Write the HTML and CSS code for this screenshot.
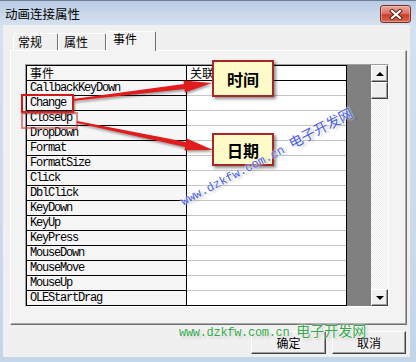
FILE: index.html
```html
<!DOCTYPE html>
<html lang="zh-CN">
<head>
  <meta charset="utf-8">
  <meta name="viewport" content="width=device-width, initial-scale=1">
  <title>动画连接属性</title>
  <link rel="stylesheet" href="styles.css">
</head>
<body>

<div class="window">
  <div class="titlebar">
    <span class="title">动画连接属性</span>
    <span class="close">
      <svg width="14" height="11" viewBox="0 0 14 11">
        <path d="M3 2 L11 9 M11 2 L3 9" stroke="#5a1812" stroke-width="4" stroke-linecap="square"/>
        <path d="M3 2 L11 9 M11 2 L3 9" stroke="#fff" stroke-width="2.2" stroke-linecap="square"/>
      </svg>
    </span>
  </div>

  <div class="client">
    <div class="tabs">
      <div class="tab t1">常规</div>
      <div class="tab t2">属性</div>
      <div class="tab active">事件</div>
    </div>

    <div class="page">
      <div class="grid">
        <div class="sheet">
          <div class="row head"><div class="c1">事件</div><div class="c2">关联变量</div></div>
          <div class="row"><div class="c1">CallbackKeyDown</div><div class="c2"></div></div>
          <div class="row"><div class="c1">Change</div><div class="c2"></div></div>
          <div class="row"><div class="c1">CloseUp</div><div class="c2"></div></div>
          <div class="row"><div class="c1">DropDown</div><div class="c2"></div></div>
          <div class="row"><div class="c1">Format</div><div class="c2"></div></div>
          <div class="row"><div class="c1">FormatSize</div><div class="c2"></div></div>
          <div class="row"><div class="c1">Click</div><div class="c2"></div></div>
          <div class="row"><div class="c1">DblClick</div><div class="c2"></div></div>
          <div class="row"><div class="c1">KeyDown</div><div class="c2"></div></div>
          <div class="row"><div class="c1">KeyUp</div><div class="c2"></div></div>
          <div class="row"><div class="c1">KeyPress</div><div class="c2"></div></div>
          <div class="row"><div class="c1">MouseDown</div><div class="c2"></div></div>
          <div class="row"><div class="c1">MouseMove</div><div class="c2"></div></div>
          <div class="row"><div class="c1">MouseUp</div><div class="c2"></div></div>
          <div class="row"><div class="c1">OLEStartDrag</div><div class="c2"></div></div>
        </div>
        <div class="dead"></div>
        <div class="vscroll">
          <div class="sbtn"><span class="arr up"></span></div>
          <div class="thumb"></div>
          <div class="track"></div>
          <div class="sbtn"><span class="arr down"></span></div>
        </div>
      </div>
    </div>

    <div class="buttons">
      <button class="btn ok">确定</button>
      <button class="btn">取消</button>
    </div>
  </div>

  <!-- annotations drawn over the dialog -->
  <div class="mark mark-change"></div>
  <div class="mark mark-closeup"></div>
  <svg class="arrows" width="416" height="362" viewBox="0 0 416 362">
    <polygon points="72.9,98 183.9,82.9 183.5,79.4 212,82 184.9,91.4 184.5,87.9 73.1,100"/>
    <polygon points="77.2,120 186.1,141 186.8,137.5 213,149 184.4,149.3 185.1,145.9 76.8,122"/>
  </svg>
  <div class="callout callout-time">时间</div>
  <div class="callout callout-date">日期</div>
  <div class="wm wm-diag"><span class="lat">www.dzkfw.com.cn </span><span class="cjk">电子开发网</span></div>
  <div class="wm wm-foot"><span class="lat">www.dzkfw.com.cn </span><span class="cjk">电子开发网</span></div>
</div>

</body>
</html>
```

FILE: styles.css
```css
body {margin: 0; background: #fff; font-family: "Noto Sans CJK SC", "DejaVu Sans", sans-serif;}

.window {position: relative; width: 416px; height: 362px; display: flex; flex-direction: column; box-sizing: border-box;
  background: linear-gradient(to bottom, #b7cbe4 0, #cbd9eb 14px, #d6e1ef 25px, #c4d5ea 100%);
  border-top: 1px solid #6d7f96; overflow: hidden;}

/* title bar */
.titlebar {height: 24px; display: flex; align-items: flex-start; padding-left: 5px;}
.title {font-size: 12.5px; line-height: 14px; margin-top: 6px; color: #000; flex: 1;}
.close {width: 31px; height: 18px; margin: 4px 5px 0 0; box-sizing: border-box; border: 1px solid #7b2a22; border-radius: 3px;
  background: linear-gradient(to bottom, #eba398 0, #dc7566 45%, #c8402f 55%, #d9664f 100%);
  display: flex; align-items: center; justify-content: center; box-shadow: inset 0 0 0 1px rgba(255,255,255,.35);}

/* dialog client area */
.client {flex: 1; margin: 0 6px 5px 3px; background: #f0f0f0; padding: 6px 3px 0 7px; display: flex; flex-direction: column;}

.tabs {display: flex; align-items: flex-end; height: 19px; padding-left: 3px; position: relative; z-index: 1;}
.tab {height: 17px; box-sizing: border-box; border: 1px solid; border-color: #fff #6f6f6f transparent #fff; border-bottom: none;
  border-radius: 2px 2px 0 0; font-size: 12px; line-height: 14px; padding: 1px 0 0 4px; background: #f0f0f0; color: #000;}
.t1 {width: 45px;}
.t2 {width: 48px; padding-left: 5px;}
.tab.active {width: 50px; height: 20px; margin-bottom: -1px; padding: 0 0 0 6px; background: #f3f3f3;}

.page {height: 275px; box-sizing: border-box; border: 1px solid; border-color: #fff #6f6f6f #6f6f6f #fff;
  box-shadow: inset -1px -1px #a8a8a8; background: #f3f3f3; padding: 13px 0 0 14px;}

/* event grid */
.grid {display: flex; width: 364px; box-sizing: border-box; border: 1px solid; border-color: #a0a0a0 #fff #fff #a0a0a0;}
.sheet {width: 321px; box-sizing: border-box; border: 1px solid #000;}
.row {display: flex; height: 15px; box-sizing: border-box;}
.row:last-child {height: 14px;}
.c1 {width: 160px; box-sizing: border-box; border-right: 1px solid #000; border-bottom: 1px solid #000; background: #f6f6f6;
  padding-left: 3px; font-family: "Liberation Mono", monospace; font-size: 12px; letter-spacing: -1.2px; line-height: 14px; color: #000;}
.c2 {flex: 1; border-bottom: 1px solid #c4c4c4; background: #fff; padding-left: 3px; font-size: 12px; line-height: 14px;}
.row:last-child .c1, .row:last-child .c2 {border-bottom: none;}
.head .c1, .head .c2 {border-bottom-color: #000; font-family: "Noto Sans CJK SC", sans-serif; font-size: 12px; letter-spacing: 0;}
.dead {width: 24px; background: #808080;}

.vscroll {width: 17px; display: flex; flex-direction: column;
  background: repeating-conic-gradient(#fff 0 25%, #ebebeb 0 50%) 0 0 / 2px 2px;}
.sbtn, .thumb {height: 17px; box-sizing: border-box; background: #f0f0f0; border: 1px solid; border-color: #fff #404040 #404040 #fff;
  box-shadow: inset -1px -1px #a0a0a0; display: flex; align-items: center; justify-content: center;}
.track {flex: 1;}
.arr {width: 0; height: 0; border-left: 4px solid transparent; border-right: 4px solid transparent;}
.arr.up {border-bottom: 4px solid #000;}
.arr.down {border-top: 4px solid #000;}

.buttons {display: flex; justify-content: flex-end; gap: 6px; margin: 6px 1px 0 0;}
.btn {width: 74px; height: 23px; box-sizing: border-box; background: #f0f0f0; border: 1px solid; border-color: #fff #404040 #404040 #fff;
  box-shadow: inset -1px -1px #a0a0a0; font-family: "Noto Sans CJK SC", sans-serif; font-size: 12px; color: #000; padding: 0;}
.btn.ok {width: 75px;}

/* annotations */
.mark {position: absolute; box-sizing: border-box;}
.mark-change {left: 21px; top: 93px; width: 53px; height: 19px; border: 2px solid #d01a1a; box-shadow: 1px 1px 2px rgba(0,0,0,.4);}
.mark-closeup {left: 21px; top: 111px; width: 57px; height: 17px; border: 2px solid rgba(214,60,60,.6);}

.arrows {position: absolute; left: 0; top: 0; pointer-events: none; filter: drop-shadow(1px 2px 1px rgba(0,0,0,.35));}
.arrows polygon {fill: #e21c1c;}

.callout {position: absolute; left: 212px; width: 62px; box-sizing: border-box; border: 2px solid #a8282a; background: #fffbc8;
  box-shadow: 2px 2px 3px rgba(0,0,0,.45); display: flex; align-items: center; justify-content: center;
  font-size: 16px; font-weight: bold; color: #000;}
.callout-time {top: 59px; height: 37px;}
.callout-date {top: 132px; height: 33px;}

.wm {position: absolute; white-space: nowrap; line-height: 16px;}
.wm .lat {font-family: "Liberation Mono", monospace; font-size: 12px;}
.wm .cjk {font-family: "Noto Sans CJK SC", sans-serif; font-size: 14px;}
.wm-diag {left: 181px; top: 190px; transform: rotate(-27.5deg); transform-origin: 0 50%; color: #4b5ee6;
  text-shadow: 0 0 2px #fff, 0 0 3px #fff, 2px 2px 3px rgba(0,0,0,.25);}
.wm-foot {left: 179px; top: 320px; color: #33a94c; text-shadow: 0 0 2px #fff, 0 0 4px #fff, 2px 2px 3px rgba(0,0,0,.2);}
.wm-foot .lat {letter-spacing: -0.3px;}
```
